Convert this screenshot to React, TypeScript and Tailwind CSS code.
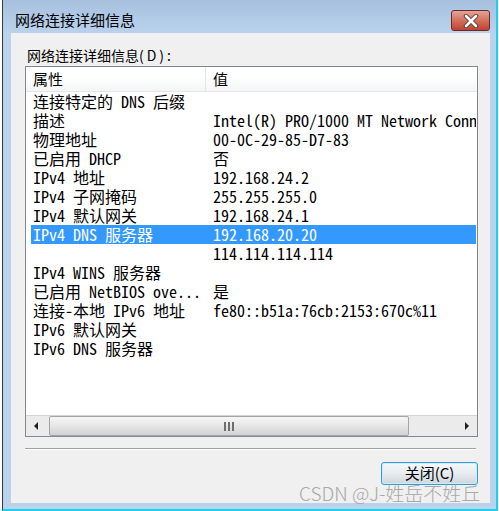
import React from "react";

const rows: [string, string][] = [
  ["连接特定的 DNS 后缀", ""],
  ["描述", "Intel(R) PRO/1000 MT Network Connection"],
  ["物理地址", "00-0C-29-85-D7-83"],
  ["已启用 DHCP", "否"],
  ["IPv4 地址", "192.168.24.2"],
  ["IPv4 子网掩码", "255.255.255.0"],
  ["IPv4 默认网关", "192.168.24.1"],
  ["IPv4 DNS 服务器", "192.168.20.20"],
  ["", "114.114.114.114"],
  ["IPv4 WINS 服务器", ""],
  ["已启用 NetBIOS ove...", "是"],
  ["连接-本地 IPv6 地址", "fe80::b51a:76cb:2153:670c%11"],
  ["IPv6 默认网关", ""],
  ["IPv6 DNS 服务器", ""],
];

const mono = "font-['Noto_Sans_Mono_CJK_SC','Liberation_Mono','Noto_Sans_CJK_SC',monospace]";

export default function App() {
  return (
    <div className="w-[499px] h-[511px] bg-white overflow-hidden relative pl-[2px] font-['Noto_Sans_CJK_SC',sans-serif]">
      <div className="w-[496px] h-[511px] border-l border-l-[#3a3a3a] border-r-2 border-r-[#22cfe6] border-b-2 border-b-[#22cfe6] bg-[#bad2ec] flex flex-col">
        {/* title bar */}
        <div className="h-[33px] shrink-0 flex bg-linear-to-b from-[#a6c0de] to-[#bad2ec] pl-[12px] pr-[6px]">
          <div className="flex-1 text-[15px] leading-[20px] pt-[10px] text-black">网络连接详细信息</div>
          <div className="mt-[10px] w-[39px] h-[21px] rounded-[3px] border border-[#6a2a2a] bg-linear-to-b from-[#e5a596] via-[#d3705e] to-[#c0402e] flex items-center justify-center">
            <svg width="18" height="14" viewBox="0 0 18 14">
              <path d="M4 2 L14 12 M14 2 L4 12" stroke="#5a3a3a" strokeWidth="4.5" strokeLinecap="round" fill="none" />
              <path d="M4 2 L14 12 M14 2 L4 12" stroke="#ffffff" strokeWidth="2.6" strokeLinecap="round" fill="none" />
            </svg>
          </div>
        </div>
        {/* client area */}
        <div className="flex-1 min-h-0 flex pl-[8px] pr-[6px] pb-[6px]">
          <div className="flex-1 min-w-0 bg-[#f0f0f0] flex flex-col pl-[14px] pr-[12px]">
            <div className="pl-[2px] pt-[12px] h-[33px] text-[14px] leading-[20px] text-black">
              网络连接详细信息<span className="tracking-[3px]">(D):</span>
            </div>
            <div className="h-[371px] min-w-0 overflow-hidden border border-[#828790] bg-white flex flex-col">
              {/* header */}
              <div className="h-[25px] shrink-0 flex border-b border-b-[#e5e5e5] bg-linear-to-b from-white from-40% to-[#f4f5f6]">
                <div className="w-[179px] shrink-0 pl-[7px] flex items-center text-[15px] text-black">属性</div>
                <div className="w-px bg-[#e3e4e6]" />
                <div className="flex-1 pl-[7px] flex items-center text-[15px] text-black">值</div>
              </div>
              {/* rows */}
              <div className={`flex-1 min-h-0 flex flex-col ${mono}`}>
                {rows.map(([k, v], i) => {
                  const sel = i === 7;
                  return (
                    <div
                      key={i}
                      className={`h-[19px] shrink-0 ml-[5px] mr-[1px] flex items-center text-[16px] leading-[19px] whitespace-pre ${sel ? "bg-[#3399ff] text-white" : "text-black"}`}
                    >
                      <div className="w-[175px] shrink-0 pl-[2px] overflow-hidden">{k}</div>
                      <div className="flex-1 min-w-0 pl-[7px] overflow-hidden">{v}</div>
                    </div>
                  );
                })}
              </div>
              {/* horizontal scrollbar */}
              <div className="h-[21px] shrink-0 flex bg-[#ebebeb] border-t border-t-[#d4d4d4]">
                <div className="w-[23px] shrink-0 flex items-center justify-center pr-[2px]">
                  <svg width="5" height="8" viewBox="0 0 5 8">
                    <path d="M4 0 L0 4 L4 8 Z" fill="#202020" />
                  </svg>
                </div>
                <div className="w-[360px] shrink-0 rounded-[2px] border border-[#a4a4a4] bg-linear-to-b from-[#f6f6f6] via-[#e6e6e6] to-[#d2d2d2] flex items-center justify-center gap-[2px]">
                  <div className="w-[2px] h-[9px] bg-[#6e6e6e]" />
                  <div className="w-[2px] h-[9px] bg-[#6e6e6e]" />
                  <div className="w-[2px] h-[9px] bg-[#6e6e6e]" />
                </div>
                <div className="flex-1" />
                <div className="w-[17px] shrink-0 flex items-center justify-center pr-[4px]">
                  <svg width="5" height="8" viewBox="0 0 5 8">
                    <path d="M1 0 L5 4 L1 8 Z" fill="#202020" />
                  </svg>
                </div>
              </div>
            </div>
            {/* separator */}
            <div className="mt-[11px] h-[2px] border-t border-t-[#a0a0a0] border-b border-b-white mr-[2px]" />
            {/* button row */}
            <div className="flex justify-end pt-[12px]">
              <div className="w-[97px] h-[23px] rounded-[3px] border border-[#3a9ad6] bg-linear-to-b from-[#f4f8fb] via-[#e6ecf0] to-[#cfd6da] shadow-[inset_0_0_0_1px_#cdeaf8] flex items-center justify-center text-[15px] text-black">
                关闭(C)
              </div>
            </div>
          </div>
        </div>
      </div>
      {/* watermark */}
      <div className="absolute left-[299px] top-[481px] text-[19px] leading-[24px] font-light text-[#a8a8a8] whitespace-pre font-['Noto_Sans_CJK_SC',sans-serif]">
        CSDN @J-姓岳不姓丘
      </div>
    </div>
  );
}
